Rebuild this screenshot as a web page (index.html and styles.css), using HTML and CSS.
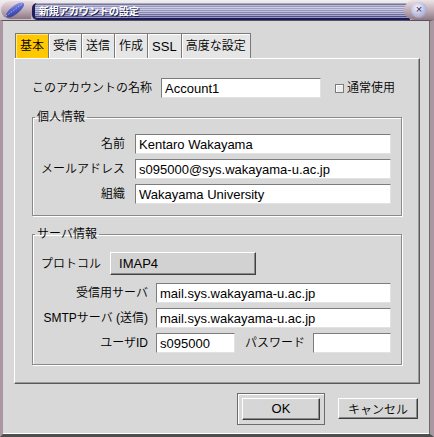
FILE: index.html
```html
<!DOCTYPE html>
<html lang="ja">
<head>
    <meta charset="UTF-8">
    <title>新規アカウントの設定</title>
    <link rel="stylesheet" href="styles.css">
</head>
<body>
    <div class="window">
        <div class="titlebar">
            <div class="title-icon">
                <svg width="34" height="20" viewBox="0 0 34 20">
                    <defs>
                        <linearGradient id="cap" x1="0" y1="0" x2="0" y2="1">
                            <stop offset="0" stop-color="#eadce2"/>
                            <stop offset="0.5" stop-color="#c2aeb8"/>
                            <stop offset="1" stop-color="#8c7882"/>
                        </linearGradient>
                        <linearGradient id="quill" x1="0" y1="1" x2="1" y2="0">
                            <stop offset="0" stop-color="#2a3490"/>
                            <stop offset="0.6" stop-color="#5a68cc"/>
                            <stop offset="1" stop-color="#aab4f0"/>
                        </linearGradient>
                    </defs>
                    <path d="M10 1 H34 L31 19 H10 A9 9 0 0 1 10 1 Z" fill="url(#cap)"/>
                    <ellipse cx="15" cy="10" rx="11" ry="4.2" transform="rotate(-38 15 10)" fill="url(#quill)"/>
                    <path d="M6 16 L22 4" stroke="#c8d0ff" stroke-width="0.8" stroke-dasharray="1.5 1.5"/>
                </svg>
            </div>
            <div class="title-strip"><span class="title-text">新規アカウントの設定</span></div>
            <div class="title-close"><span class="close-btn">×</span></div>
        </div>

        <div class="frame">
            <div class="tabs">
                <span class="tab active">基本</span>
                <span class="tab">受信</span>
                <span class="tab">送信</span>
                <span class="tab">作成</span>
                <span class="tab latin">SSL</span>
                <span class="tab">高度な設定</span>
            </div>

            <div class="panel">
                <div class="name-row">
                    <label class="label" for="account">このアカウントの名称</label>
                    <input class="field name-field" id="account" value="Account1">
                    <input class="check" type="checkbox" id="default-use">
                    <label class="label" for="default-use">通常使用</label>
                </div>

                <fieldset class="group">
                    <legend>個人情報</legend>
                    <div class="form-grid personal">
                        <label class="label">名前</label>
                        <input class="field" value="Kentaro Wakayama">
                        <label class="label">メールアドレス</label>
                        <input class="field" value="s095000@sys.wakayama-u.ac.jp">
                        <label class="label">組織</label>
                        <input class="field" value="Wakayama University">
                    </div>
                </fieldset>

                <fieldset class="group">
                    <legend>サーバ情報</legend>
                    <div class="protocol-row">
                        <span class="label">プロトコル</span>
                        <button class="select-btn">IMAP4</button>
                    </div>
                    <div class="form-grid server">
                        <label class="label">受信用サーバ</label>
                        <input class="field" value="mail.sys.wakayama-u.ac.jp">
                        <label class="label">SMTPサーバ (送信)</label>
                        <input class="field" value="mail.sys.wakayama-u.ac.jp">
                        <label class="label">ユーザID</label>
                        <div class="login-row">
                            <input class="field user-field" value="s095000">
                            <label class="label">パスワード</label>
                            <input class="field pass-field" type="password">
                        </div>
                    </div>
                </fieldset>
            </div>

            <div class="actions">
                <div class="default-frame"><button class="btn ok-btn">OK</button></div>
                <button class="btn cancel-btn">キャンセル</button>
            </div>
        </div>
    </div>
</body>
</html>
```

FILE: styles.css
```css
body {
    margin: 0;
    background-color: #d8d8d8;
    font-family: "Liberation Sans", "Noto Sans CJK JP", sans-serif;
}
.window {
    width: 434px;
    height: 437px;
    display: flex;
    flex-direction: column;
    background-color: #d8d8d8;
}

/* title bar */
.titlebar {
    height: 20px;
    display: flex;
    background: linear-gradient(#f0eef0, #c8c0c4);
}
.title-icon {
    width: 34px;
    height: 20px;
}
.title-strip {
    flex: 1;
    height: 15px;
    margin-top: 3px;
    margin-left: -2px;
    border-left: 3px solid #1e1e58;
    border-bottom: 2px solid #1a1a5a;
    border-radius: 5px 0 0 5px;
    background:
        repeating-linear-gradient(180deg, rgba(255, 255, 255, 0.45) 0 1px, rgba(255, 255, 255, 0) 1px 2px),
        linear-gradient(180deg, #5a5a86 0%, #a8a8cc 30%, #8888b4 65%, #3a3a78 100%);
    display: flex;
    align-items: center;
}
.title-text {
    padding-left: 4px;
    color: #fff;
    font-family: "Noto Sans CJK JP", sans-serif;
    font-size: 10px;
    font-weight: bold;
    line-height: 14px;
    text-shadow: 1px 1px 0 #1e1e50;
}
.title-close {
    width: 30px;
    height: 20px;
    margin-left: -6px;
    border-radius: 10px 0 0 10px;
    background: linear-gradient(#ece2e6, #b8a4ae 60%, #8e7a84);
    display: flex;
    align-items: center;
    justify-content: center;
}
.close-btn {
    width: 16px;
    height: 16px;
    border-radius: 50%;
    background: radial-gradient(circle at 40% 35%, #f4f4ff, #b4b4d4 60%, #7878a0);
    color: #26265a;
    font-size: 11px;
    line-height: 15px;
    text-align: center;
}

/* window body */
.frame {
    flex: 1;
    display: flex;
    flex-direction: column;
    border-left: 3px solid #ab97a1;
    border-right: 4px solid #ab97a1;
    border-top: 1px solid #5c5060;
    border-bottom: 3px solid #4e4e4e;
    box-shadow: inset -1px 0 0 #6a6a6a, inset 0 -1px 0 #fff;
}
.label {
    font-size: 12px;
    font-weight: 350;
    line-height: 16px;
    color: #000;
    white-space: nowrap;
}

/* tabs */
.tabs {
    display: flex;
    margin: 12px 0 0 12px;
    height: 25px;
}
.tab {
    min-width: 24px;
    padding: 0 4px;
    border: 1px solid #7a7a7a;
    border-bottom: none;
    margin-right: -1px;
    background-color: #e6e6e6;
    box-shadow: inset 1px 1px 0 #fff;
    font-size: 12px;
    font-weight: 350;
    line-height: 25px;
    text-align: center;
}
.tab.latin {
    font-size: 13px;
}
.tab:last-child {
    min-width: 60px;
}
.tab.active {
    background-color: #ffc800;
    box-shadow: inset 1px 1px 0 #ffe680;
}

/* panel */
.panel {
    width: 406px;
    box-sizing: border-box;
    margin-left: 11px;
    padding: 19px 17px 18px 17px;
    border: 1px solid;
    border-color: #fff #5a5a5a #5a5a5a #fff;
    box-shadow: inset -1px -1px 0 #9a9a9a;
}
.name-row {
    display: flex;
    align-items: center;
    height: 20px;
}
.name-row .field {
    margin-left: 9px;
}
.name-field {
    width: 160px;
}
.check {
    appearance: none;
    width: 9px;
    height: 9px;
    margin: 0 3px 0 14px;
    border: 1px solid #7c7c7c;
    background-color: #ececec;
    box-shadow: inset 1px 1px 0 #fff;
}

.field {
    box-sizing: border-box;
    height: 20px;
    margin: 0;
    padding: 0 3px;
    border: 1px solid;
    border-color: #7c7c7c #e2e2e2 #e2e2e2 #7c7c7c;
    background-color: #fff;
    font-family: "Liberation Sans", sans-serif;
    font-size: 13px;
    color: #000;
    outline: none;
}

/* groups */
.group {
    margin: 11px 0 0 0;
    padding: 9px 9px 11px 0;
    border: 1px solid #8a8a8a;
    box-shadow: inset 1px 1px 0 #fff, 1px 1px 0 #fff;
}
.group + .group {
    margin-top: 10px;
    padding-top: 10px;
}
.group legend {
    margin-left: 2px;
    padding: 0 2px;
    font-size: 12px;
    font-weight: 350;
    line-height: 16px;
}
.form-grid {
    display: grid;
    row-gap: 5px;
    align-items: center;
}
.form-grid .label {
    text-align: right;
}
.personal {
    grid-template-columns: 92px 256px;
    column-gap: 10px;
}
.server {
    grid-template-columns: 115px 235px;
    column-gap: 8px;
}
.protocol-row {
    display: flex;
    align-items: center;
    margin: 0 0 8px 8px;
}
.select-btn {
    width: 146px;
    height: 23px;
    margin-left: 9px;
    padding: 0 0 0 8px;
    text-align: left;
    border: 1px solid;
    border-color: #fff #404040 #404040 #fff;
    box-shadow: inset -1px -1px 0 #8a8a8a;
    background-color: #d2d2d2;
    font-family: "Liberation Sans", sans-serif;
    font-size: 13px;
    color: #000;
}
.login-row {
    display: flex;
    align-items: center;
}
.user-field {
    width: 79px;
}
.login-row .label {
    margin: 0 8px 0 10px;
}
.pass-field {
    flex: 1;
    min-width: 0;
}

/* bottom buttons */
.actions {
    flex: 1;
    display: flex;
    justify-content: flex-end;
    align-items: center;
    padding: 0 12px 1px 0;
    gap: 13px;
}
.default-frame {
    padding: 4px;
    border: 1px solid #6c6c6c;
    box-shadow: inset 1px 1px 0 #fff;
}
.btn {
    height: 22px;
    border: 1px solid;
    border-color: #fff #3c3c3c #3c3c3c #fff;
    box-shadow: inset -1px -1px 0 #8a8a8a;
    background-color: #d6d6d6;
    font-family: "Liberation Sans", "Noto Sans CJK JP", sans-serif;
    font-size: 12px;
    font-weight: 350;
    color: #000;
    padding: 0;
}
.ok-btn {
    width: 78px;
    display: block;
    font-size: 13px;
    font-weight: normal;
}
.cancel-btn {
    width: 80px;
    height: 21px;
}
```
